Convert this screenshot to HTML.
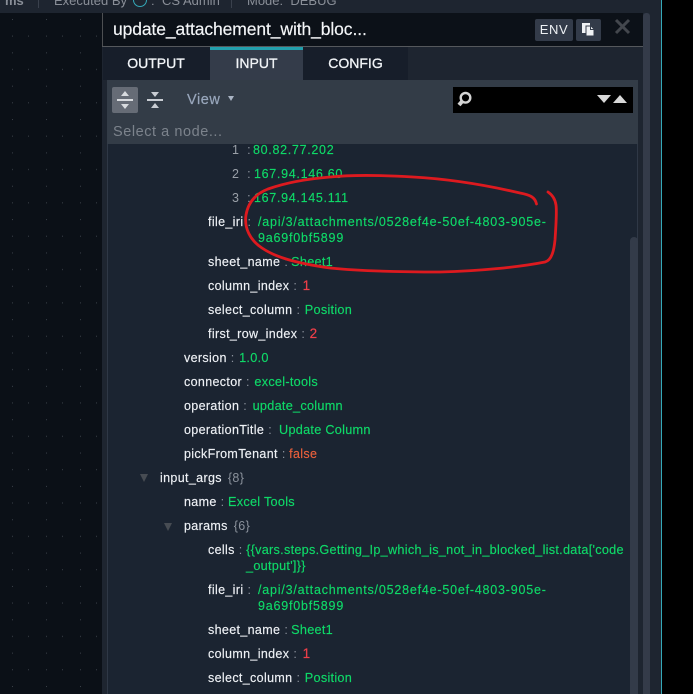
<!DOCTYPE html>
<html><head><meta charset="utf-8">
<style>
html,body{margin:0;padding:0;background:#000}
#p{position:relative;width:693px;height:694px;overflow:hidden;background:#000;font-family:"Liberation Sans",sans-serif}
#p div{position:absolute}
.r{font-size:12.5px;line-height:16px;height:16px;white-space:nowrap;color:#eef1f5;letter-spacing:.35px;-webkit-text-stroke:.15px #eef1f5}
.c{color:#8b929c;margin:0 4.5px 0 4px;-webkit-text-stroke:0}
.g{color:#0fd968;font-size:12.7px;letter-spacing:.27px;-webkit-text-stroke:.15px #0fd968}
.ip{letter-spacing:.7px;font-size:12.5px}
.pa{letter-spacing:.8px;font-size:12.5px}
.n{color:#ee3f49;-webkit-text-stroke:.2px #ee3f49;font-size:13.5px}
.o{color:#e9603c;-webkit-text-stroke:.15px #e9603c}
.k{color:#9aa0a8;-webkit-text-stroke:0}
.b{color:#8b929c;margin-left:6px;-webkit-text-stroke:0}
.t{font-size:14px;font-weight:400;letter-spacing:0;color:#f2f5f8;line-height:20px;text-align:center;-webkit-text-stroke:.3px #f2f5f8}
</style></head><body>
<div id="p">
<div style="left:0;top:0;width:661px;height:694px;background:#1e2530"></div>
<div style="left:661px;top:0;width:1px;height:694px;background:#34a9b8"></div>
<div style="left:0;top:13px;width:102px;height:681px;background:#0b1017"></div>
<svg style="position:absolute;left:0;top:13px" width="102" height="681">
<defs><pattern id="d" x="0" y="0" width="34" height="33.35" patternUnits="userSpaceOnUse">
<rect x="12" y="6" width="1" height="1" fill="#3a4048"/><rect x="12" y="22.6" width="1" height="1" fill="#3a4048"/><rect x="28" y="22.6" width="1" height="1" fill="#3a4048"/>
</pattern></defs><rect width="102" height="681" fill="url(#d)"/></svg>
<div style="left:0;top:0;width:661px;height:13px;overflow:hidden;font-size:13px;color:#8a8f98;line-height:2px">
<div style="left:5px;top:0;white-space:nowrap;font-weight:700">ms</div>
<div style="left:38px;top:0;width:1px;height:8px;background:#3a414d"></div>
<div style="left:54px;top:0;white-space:nowrap">Executed By</div>
<div style="left:133px;top:-7px;width:12px;height:12px;border:1px solid #34a9b8;border-radius:50%"></div>
<div style="left:151px;top:0;white-space:nowrap">:</div>
<div style="left:162px;top:0;white-space:nowrap">CS Admin</div>
<div style="left:231px;top:0;width:1px;height:8px;background:#3a414d"></div>
<div style="left:247px;top:0;white-space:nowrap">Mode: &nbsp;DEBUG</div>
</div>
<div style="left:102px;top:13px;width:541px;height:33px;background:#0c1118;border-left:1px solid #4d4f52;box-sizing:border-box"></div>
<div style="left:102px;top:46px;width:541px;height:1px;background:#55585c"></div>
<div style="left:643px;top:13px;width:7px;height:681px;background:#343b49;border-radius:3px 3px 0 0"></div>
<div style="left:113px;top:17px;font-size:17.5px;line-height:24px;color:#f4f6f8;letter-spacing:-.1px;white-space:nowrap;-webkit-text-stroke:.15px #f4f6f8">update_attachement_with_bloc...</div>
<div style="left:535px;top:19px;width:38px;height:22px;background:#333b49;border-radius:2px;color:#eef1f4;font-size:13px;line-height:21px;text-align:center;letter-spacing:.6px">ENV</div>
<div style="left:576px;top:19px;width:25px;height:22px;background:#333b49;border-radius:2px"></div>
<svg style="position:absolute;left:580px;top:21px" width="18" height="17">
<path d="M2 2h8v10H2z" fill="#f0f2f4"/><path d="M6 5h5l3 3v7H6z" fill="#f0f2f4" stroke="#333b49" stroke-width="1"/><path d="M10.500 5.500v3h3" fill="none" stroke="#333b49"/></svg>
<svg style="position:absolute;left:614px;top:18px" width="17" height="17"><path d="M2 2L15 15M15 2L2 15" stroke="#43474d" stroke-width="3"/></svg>

<div style="left:103px;top:47px;width:107px;height:33px;background:#171e2a"></div>
<div style="left:303px;top:47px;width:105px;height:33px;background:#171e2a"></div>
<div style="left:210px;top:47px;width:93px;height:33px;background:#343c4a"></div>
<div style="left:210px;top:47px;width:93px;height:3px;background:#229fac"></div>
<div class="t" style="left:103px;top:53px;width:106px">OUTPUT</div>
<div class="t" style="left:210px;top:53px;width:93px">INPUT</div>
<div class="t" style="left:303px;top:53px;width:105px">CONFIG</div>

<div style="left:107px;top:80px;width:531px;height:64px;background:#333c47"></div>
<div style="left:112px;top:87px;width:26px;height:26px;background:#666c76;border-radius:2px"></div>
<svg style="position:absolute;left:112px;top:87px" width="26" height="26"><path d="M5 12h16v2H5z" fill="#d8dbdf"/><path d="M13 4l4 5H9zM13 22l-4-5h8z" fill="#d8dbdf"/></svg>
<svg style="position:absolute;left:142px;top:87px" width="26" height="26"><path d="M5 12h16v2H5z" fill="#c9cdd3"/><path d="M13 10l-4-5h8zM13 16l4 5H9z" fill="#c9cdd3"/></svg>
<div style="left:187px;top:91px;font-size:14.5px;line-height:18px;color:#98a6bb;letter-spacing:.55px;-webkit-text-stroke:.2px #98a6bb">View</div>
<svg style="position:absolute;left:228px;top:96px" width="7" height="6"><path d="M0 0h6L3 5z" fill="#aab4c4"/></svg>
<div style="left:453px;top:87px;width:180px;height:26px;background:#000"></div>
<svg style="position:absolute;left:456px;top:90px" width="20" height="20"><circle cx="9.500" cy="7.800" r="4.800" fill="none" stroke="#d4d4d4" stroke-width="2.400"/><path d="M6 11.500L3 15" stroke="#d4d4d4" stroke-width="4"/></svg>
<svg style="position:absolute;left:596px;top:94px" width="32" height="10"><path d="M1 1h14L8 9z" fill="#d8d8d8"/><path d="M17 9L24 1l7 8z" fill="#d8d8d8"/></svg>
<div style="left:113px;top:123px;font-size:14.5px;line-height:18px;color:#7c838c;letter-spacing:.55px">Select a node...</div>

<div style="left:108px;top:144px;width:529px;height:550px;background:#1b2431;overflow:hidden">
<div style="left:0;top:0;width:0;height:0">
<div class="r" style="left:124px;top:-2px"><span class="k">1</span><span class="c" style="margin-right:2px"> :</span><span class="g ip">80.82.77.202</span></div>
<div class="r" style="left:124px;top:22px"><span class="k">2</span><span class="c" style="margin-right:3px"> :</span><span class="g ip">167.94.146.60</span></div>
<div class="r" style="left:124px;top:46px"><span class="k">3</span><span class="c" style="margin-right:3px"> :</span><span class="g ip">167.94.145.111</span></div>
<div class="r" style="left:100px;top:70px">file_iri<span class="c">:</span></div>
<div class="r g pa" style="left:150px;top:70px">/api/3/attachments/0528ef4e-50ef-4803-905e-</div>
<div class="r g pa" style="left:150px;top:86px">9a69f0bf5899</div>
<div class="r" style="left:100px;top:110px">sheet_name<span class="c" style="margin-right:3px">:</span><span class="g">Sheet1</span></div>
<div class="r" style="left:100px;top:134px">column_index<span class="c" style="margin-right:5.500px">:</span><span class="n">1</span></div>
<div class="r" style="left:100px;top:158px">select_column<span class="c">:</span><span class="g">Position</span></div>
<div class="r" style="left:100px;top:182px">first_row_index<span class="c">:</span><span class="n">2</span></div>
<div class="r" style="left:76px;top:206px">version<span class="c">:</span><span class="g">1.0.0</span></div>
<div class="r" style="left:76px;top:230px">connector<span class="c">:</span><span class="g">excel-tools</span></div>
<div class="r" style="left:76px;top:254px">operation<span class="c" style="margin-right:5.500px">:</span><span class="g">update_column</span></div>
<div class="r" style="left:76px;top:278px">operationTitle<span class="c" style="margin-right:7px">:</span><span class="g">Update Column</span></div>
<div class="r" style="left:76px;top:302px">pickFromTenant<span class="c" style="margin-right:3.500px">:</span><span class="o">false</span></div>
<div class="r" style="left:52px;top:326px">input_args<span class="b">{8}</span></div>
<div class="r" style="left:76px;top:350px">name<span class="c" style="margin-right:3.500px">:</span><span class="g">Excel Tools</span></div>
<div class="r" style="left:76px;top:374px">params<span class="b">{6}</span></div>
<div class="r" style="left:100px;top:398px">cells<span class="c" style="margin-right:3.500px">:</span><span class="g">{{vars.steps.Getting_Ip_which_is_not_in_blocked_list.data['code</span></div>
<div class="r g" style="left:138px;top:414px">_output']}}</div>
<div class="r" style="left:100px;top:438px">file_iri<span class="c">:</span></div>
<div class="r g pa" style="left:150px;top:438px">/api/3/attachments/0528ef4e-50ef-4803-905e-</div>
<div class="r g pa" style="left:150px;top:454px">9a69f0bf5899</div>
<div class="r" style="left:100px;top:478px">sheet_name<span class="c" style="margin-right:3px">:</span><span class="g">Sheet1</span></div>
<div class="r" style="left:100px;top:502px">column_index<span class="c" style="margin-right:5.500px">:</span><span class="n">1</span></div>
<div class="r" style="left:100px;top:526px">select_column<span class="c">:</span><span class="g">Position</span></div>
</div>
</div>
<svg style="position:absolute;left:139px;top:474px" width="40" height="60"><path d="M1 0h8L5 8z" fill="#474c53"/><path d="M25 49h8l-4 8z" fill="#474c53"/></svg>
<div style="left:107px;top:144px;width:1px;height:550px;background:#2f3846"></div>
<div style="left:637px;top:144px;width:1px;height:550px;background:#2f3846"></div>
<div style="left:630px;top:237px;width:8px;height:457px;background:#333b49;border-radius:4px 4px 0 0"></div>
<svg style="position:absolute;left:0;top:0" width="693" height="694"><path d="M536.500 204C535 197 530 195 520 193C490 186 450 179 413 177C380 175 350 175 330 177C305 179 285 183 268 189C255 194 248 203 246 215C244 228 250 240 262 248C275 257 295 263 330 268C360 271 400 272 440 272C480 271 520 267 545 262C552 260 554 250 555 240C556 225 557 212 556 205C555 198 551 194 548 192" fill="none" stroke="#dd1a1f" stroke-width="2.800" stroke-linecap="round"/></svg>
</div>
</body></html>
